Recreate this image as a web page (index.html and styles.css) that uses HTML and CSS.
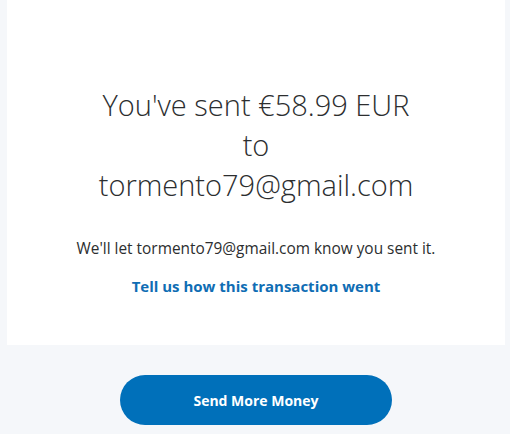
FILE: index.html
```html
<!DOCTYPE html>
<html lang="en">
<head>
<meta charset="utf-8">
<link rel="stylesheet" href="styles.css">
</head>
<body>
<main class="page">
  <section class="card">
    <h1 class="headline">You've sent €58.99 EUR<br>to<br>tormento79@gmail.com</h1>
    <p class="note">We'll let tormento79@gmail.com know you sent it.</p>
    <a class="feedback" href="#">Tell us how this transaction went</a>
  </section>
  <div class="actions">
    <a class="primary-btn" href="#">Send More Money</a>
  </div>
</main>
</body>
</html>
```
FILE: styles.css
```css
html, body {
  margin: 0;
  padding: 0;
}
body {
  background: #f5f7fa;
  font-family: "Open Sans", "Liberation Sans", sans-serif;
  color: #2c2e2f;
}
.page {
  display: flex;
  flex-direction: column;
}
.card {
  background: #fff;
  margin: 0 5px 0 7px;
  height: 345px;
  box-sizing: border-box;
  padding-top: 85px;
  display: flex;
  flex-direction: column;
  align-items: center;
  text-align: center;
}
.headline {
  margin: 0;
  font-size: 29px;
  font-weight: 300;
  line-height: 40px;
  color: #2c2e2f;
}
.note {
  margin: 34px 0 0;
  font-size: 15.4px;
  line-height: 20px;
}
.feedback {
  margin-top: 17px;
  font-size: 15px;
  line-height: 20px;
  font-weight: 700;
  color: #0f6db4;
  text-decoration: none;
}
.actions {
  display: flex;
  justify-content: center;
  padding: 30px 0 0 2px;
}
.primary-btn {
  width: 272px;
  height: 50px;
  border-radius: 25px;
  background: #0070ba;
  color: #fff;
  font-size: 14px;
  font-weight: 700;
  display: flex;
  align-items: center;
  justify-content: center;
  text-decoration: none;
}
```
